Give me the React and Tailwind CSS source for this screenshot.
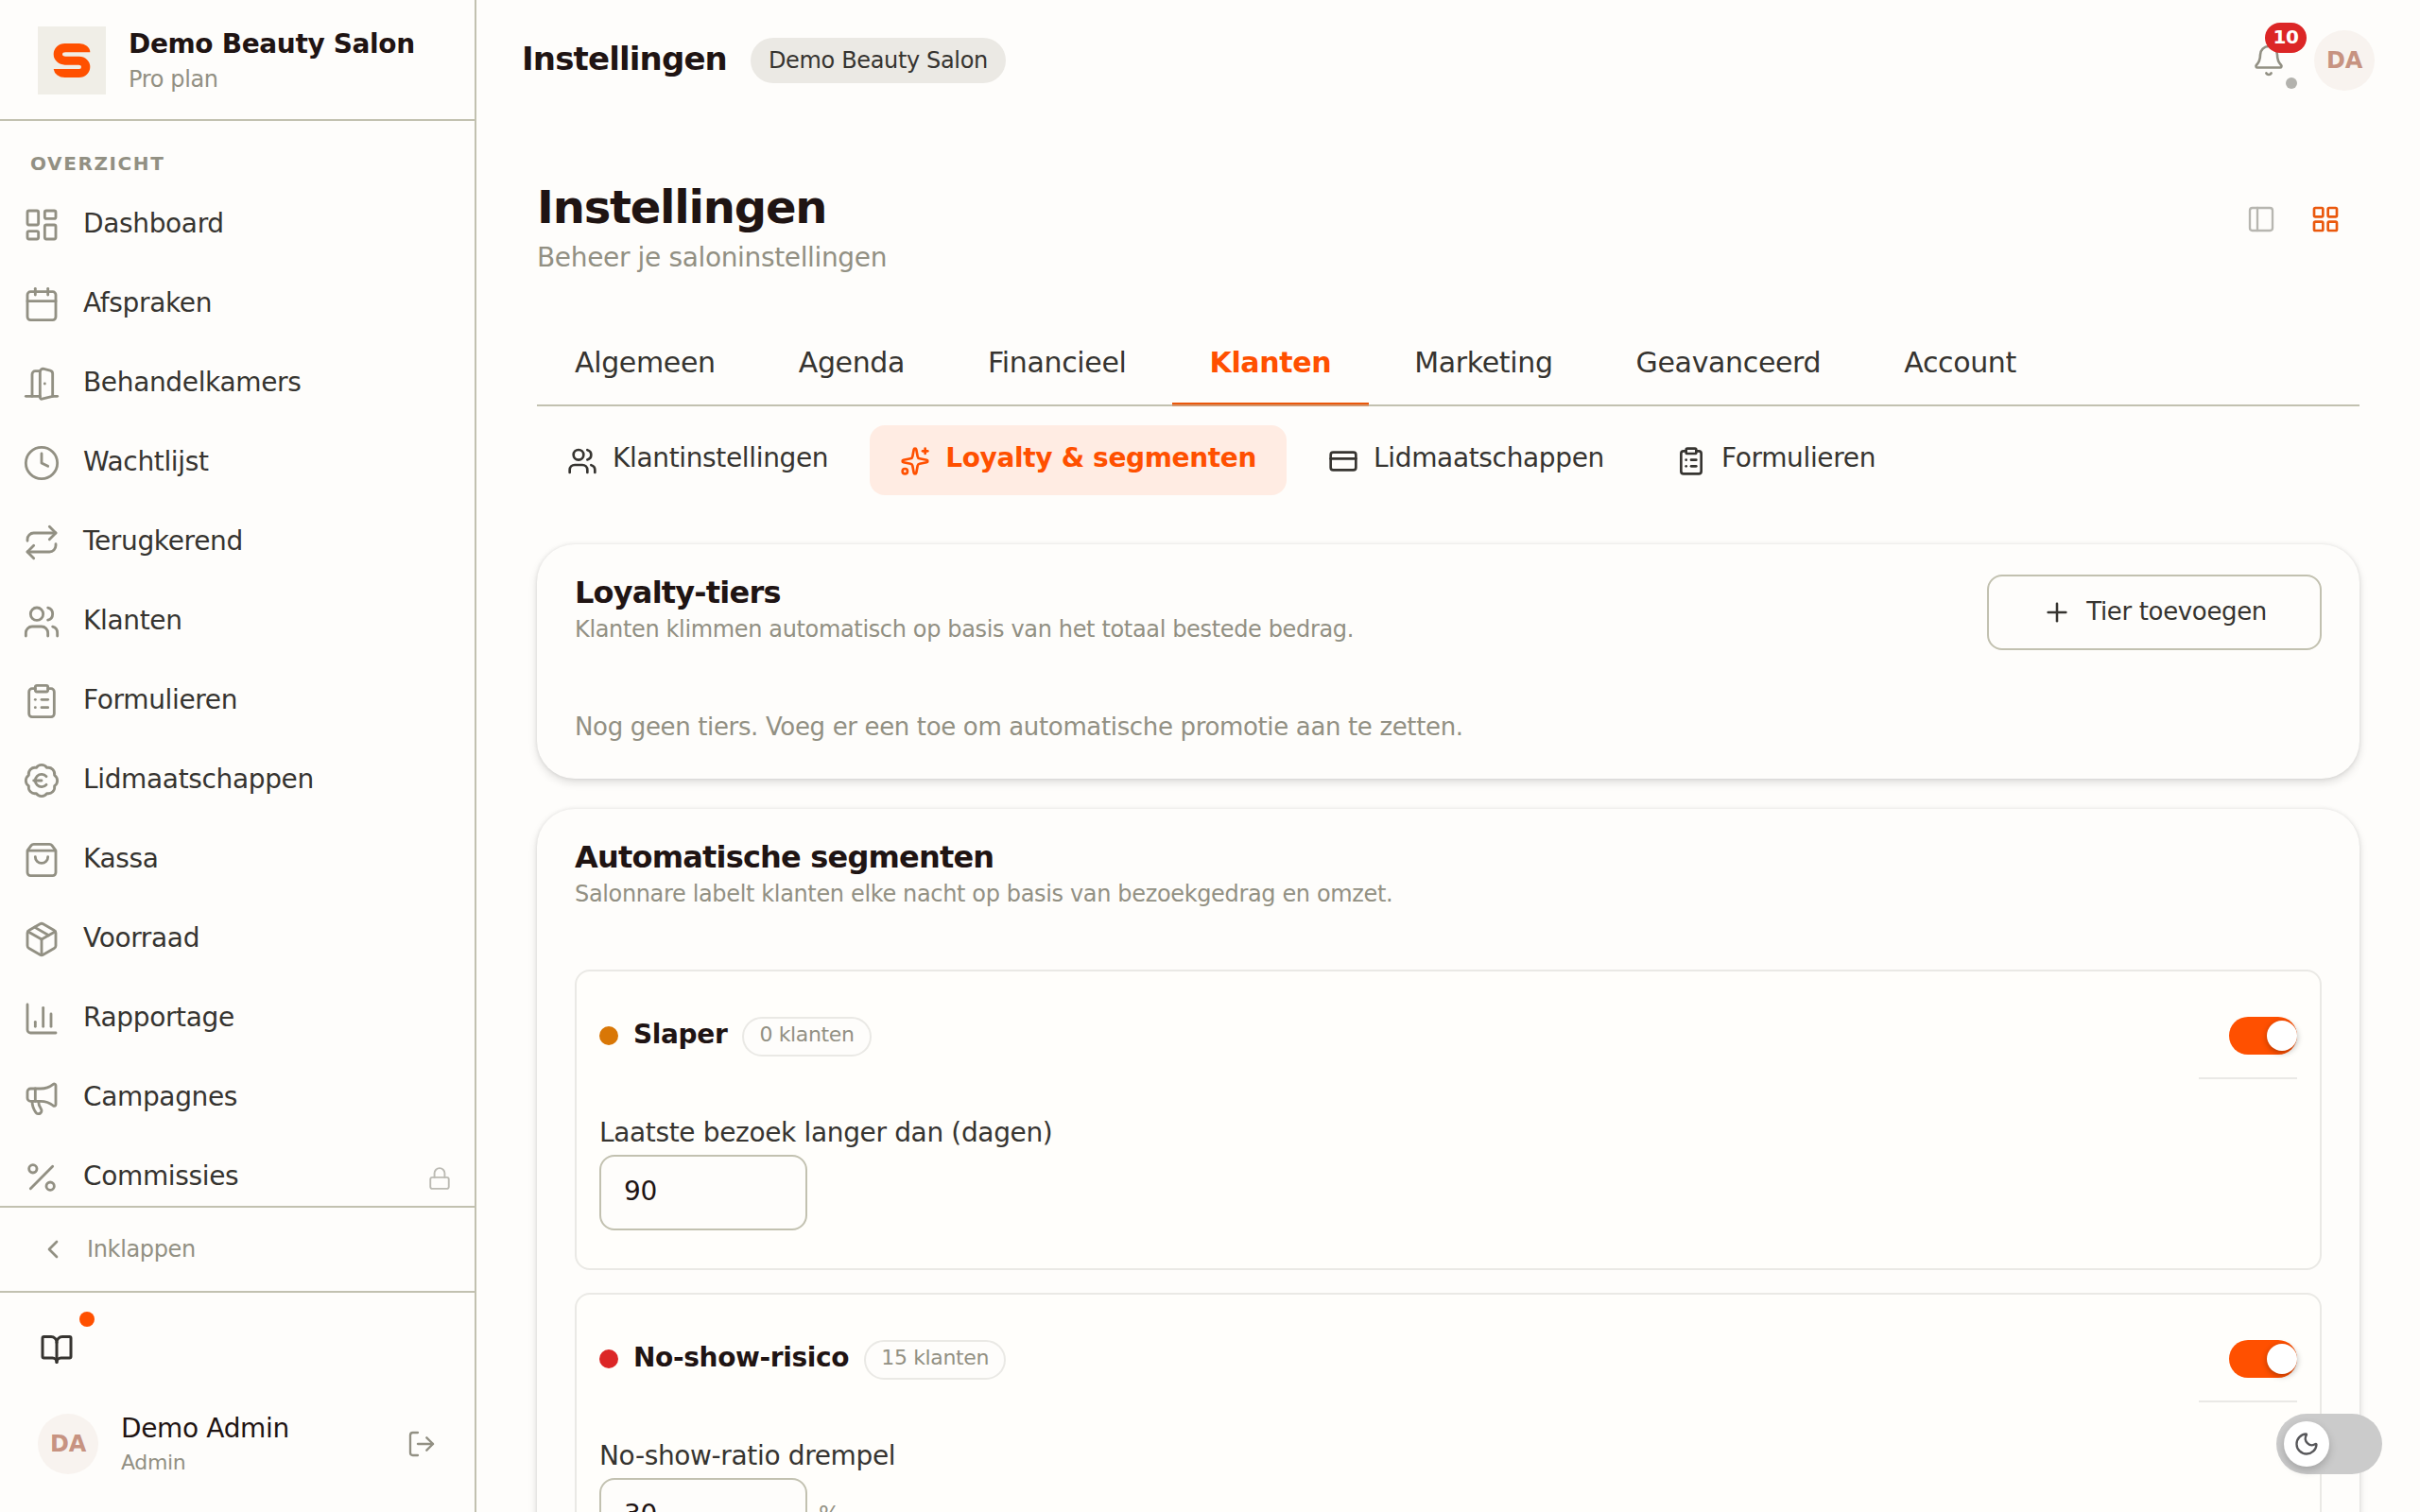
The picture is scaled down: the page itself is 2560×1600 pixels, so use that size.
import {
  BadgeEuro, Bell, BookOpen, Calendar, ChartColumn, ChevronLeft, ClipboardList, Clock, CreditCard, DoorOpen,
  LayoutDashboard, LayoutGrid, Lock, LogOut, Megaphone, Moon, Package, PanelLeft, Percent, Plus, Repeat,
  ShoppingBag, Sparkles, Users,
} from 'lucide-react'

const NAV = [
  { label: 'Dashboard', icon: LayoutDashboard },
  { label: 'Afspraken', icon: Calendar },
  { label: 'Behandelkamers', icon: DoorOpen },
  { label: 'Wachtlijst', icon: Clock },
  { label: 'Terugkerend', icon: Repeat },
  { label: 'Klanten', icon: Users },
  { label: 'Formulieren', icon: ClipboardList },
  { label: 'Lidmaatschappen', icon: BadgeEuro },
  { label: 'Kassa', icon: ShoppingBag },
  { label: 'Voorraad', icon: Package },
  { label: 'Rapportage', icon: ChartColumn },
  { label: 'Campagnes', icon: Megaphone },
  { label: 'Commissies', icon: Percent, locked: true },
]

const TABS = ['Algemeen', 'Agenda', 'Financieel', 'Klanten', 'Marketing', 'Geavanceerd', 'Account']

const SUBTABS = [
  { label: 'Klantinstellingen', icon: Users },
  { label: 'Loyalty & segmenten', icon: Sparkles },
  { label: 'Lidmaatschappen', icon: CreditCard },
  { label: 'Formulieren', icon: ClipboardList },
]

const SEGMENTS = [
  { name: 'Slaper', count: 0, dot: 'bg-[#d97706]', field: 'Laatste bezoek langer dan (dagen)', value: '90' },
  { name: 'No-show-risico', count: 15, dot: 'bg-[#dc2626]', field: 'No-show-ratio drempel', value: '30', unit: '%' },
]

function Logo() {
  return (
    <svg viewBox="0 0 216 216" className="size-[72px] shrink-0 bg-[#f0eee7]" aria-hidden="true">
      <path
        fill="#ff5000"
        d="M166 82H88Q78 82 78 88.500Q78 95 88 95H131A35 33.500 0 0 1 131 162H86A36 30 0 0 1 50 135H132Q138 135 138 128.500Q138 122 130 122H86A36 34 0 0 1 86 54H132A34 28 0 0 1 166 82Z"
      />
    </svg>
  )
}

function Avatar() {
  return (
    <div className="flex size-16 shrink-0 items-center justify-center rounded-full bg-[#f8f3ef] text-[24px] font-bold text-[#c79381]">
      DA
    </div>
  )
}

function Sidebar() {
  return (
    <aside className="flex h-full w-[504px] shrink-0 flex-col border-r-2 border-[#c2c1b0]">
      <div className="flex h-32 shrink-0 items-start gap-6 border-b-2 border-[#c2c1b0] px-10 pt-7">
        <Logo />
        <div>
          <div className="text-[28px] leading-[38px] font-bold text-[#1f1413]">Demo Beauty Salon</div>
          <div className="text-[24px] leading-9 text-[#929083]">Pro plan</div>
        </div>
      </div>

      <nav className="min-h-0 flex-1 overflow-hidden pt-7">
        <div className="mb-1.5 px-8 text-[20px] leading-[34px] font-bold tracking-[1.6px] text-[#929083] uppercase">
          Overzicht
        </div>
        {NAV.map(({ label, icon: Icon, locked }) => (
          <a key={label} className="flex h-[84px] items-center gap-6 px-6">
            <Icon size={40} strokeWidth={1.7} className="shrink-0 text-[#929083]" />
            <span className="flex-1 pb-[3px] text-[28px] text-[#363430]">{label}</span>
            {locked && <Lock size={26} strokeWidth={1.75} className="mt-0.5 text-[#bcbbb4]" />}
          </a>
        ))}
      </nav>

      <button className="flex h-[90px] shrink-0 items-center gap-5 border-t-2 border-[#c2c1b0] px-10 text-[24px] text-[#929083]">
        <ChevronLeft size={32} />
        Inklappen
      </button>

      <div className="h-[234px] shrink-0 border-t-2 border-[#c2c1b0] pt-6">
        <button className="relative ml-6 flex size-[72px] items-center justify-center text-[#363430]">
          <BookOpen size={36} />
          <span className="absolute -top-1 -right-1 size-4 rounded-full bg-[#ff5000]" />
        </button>
        <div className="mt-7 flex items-center gap-6 px-10">
          <Avatar />
          <div className="flex-1 pt-0.5 -mb-0.5">
            <div className="text-[28px] leading-9 text-[#1f1413]">Demo Admin</div>
            <div className="text-[22px] leading-9 text-[#929083]">Admin</div>
          </div>
          <LogOut size={32} strokeWidth={1.75} className="text-[#929083]" />
        </div>
      </div>
    </aside>
  )
}

function Topbar() {
  return (
    <header className="flex h-32 shrink-0 items-center justify-between px-12">
      <div className="flex items-center gap-[25px]">
        <span className="pb-[3px] text-[34px] font-bold tracking-tight text-[#1f1413]">Instellingen</span>
        <span className="flex h-12 items-center rounded-full bg-[#ebe9e4] px-[19px] text-[24px] text-[#363430]">
          Demo Beauty Salon
        </span>
      </div>
      <div className="flex items-center gap-[30px]">
        <div className="relative">
          <Bell size={36} strokeWidth={1.75} className="text-[#929083]" />
          <span className="absolute -top-[22px] left-[14px] flex h-8 w-11 items-center justify-center rounded-full bg-[#dc2626] pb-0.5 text-[20px] font-bold text-white">
            10
          </span>
          <span className="absolute top-9 left-9 size-3 rounded-full bg-[#b3b2ad]" />
        </div>
        <Avatar />
      </div>
    </header>
  )
}

function Switch() {
  return (
    <div className="ml-auto flex h-[90px] w-[104px] items-center justify-end border-b-2 border-[#eae9e6]">
      <button role="switch" aria-checked="true" className="flex h-10 w-[72px] items-center justify-end rounded-full bg-[#ff5000]">
        <span className="size-8 rounded-full bg-white shadow-[0_2px_6px_rgba(0,0,0,0.3)]" />
      </button>
    </div>
  )
}

function Segment({ name, count, dot, field, value, unit }) {
  return (
    <div className="h-[318px] rounded-2xl border-2 border-[#eae9e5] bg-[#fffefb] p-6">
      <div className="flex h-[90px] items-center gap-4">
        <span className={`mb-0.5 size-5 rounded-full ${dot}`} />
        <span className="pb-[5px] text-[28px] font-bold text-[#1f1413]">{name}</span>
        <span className="flex h-[42px] items-center rounded-full border-2 border-[#eae9e5] bg-[#fefdfb] px-4 pb-1.5 text-[22px] text-[#929083]">
          {count} klanten
        </span>
        <Switch />
      </div>
      <label className="mt-[35px] mb-px block text-[28px] leading-[44px] text-[#363430]">{field}</label>
      <div className="flex items-center gap-3">
        <input
          defaultValue={value}
          className="h-20 w-[220px] rounded-2xl border-2 border-[#c2c1b0] bg-[#fefdfb] px-6 pb-[3px] text-[28px] text-[#1f1413]"
        />
        {unit && <span className="pb-0.5 text-[24px] text-[#929083]">{unit}</span>}
      </div>
    </div>
  )
}

function Card({ title, subtitle, action, className = '', children }) {
  return (
    <section className={`rounded-[40px] bg-[#fefdfb] px-10 pt-8 shadow-[0_0_4px_rgba(0,0,0,0.09),0_4px_10px_rgba(0,0,0,0.13)] ${className}`}>
      <div className="flex items-start justify-between">
        <div>
          <h2 className="text-[32px] leading-[38px] font-bold tracking-tight text-[#1f1413]">{title}</h2>
          <p className="text-[24px] leading-10 text-[#929083]">{subtitle}</p>
        </div>
        {action}
      </div>
      {children}
    </section>
  )
}

export default function App() {
  return (
    <div className="flex h-[1600px] w-[2560px] overflow-hidden bg-[#fefdfb] font-['DejaVu_Sans',sans-serif] tracking-[-0.35px]">
      <Sidebar />

      <main className="flex min-w-0 flex-1 flex-col">
        <Topbar />
        <div className="px-16 pt-[62px]">
          <div className="flex h-[106px] items-start justify-between">
            <div>
              <h1 className="text-[48px] leading-[59px] font-bold tracking-tight text-[#1f1413]">Instellingen</h1>
              <p className="text-[28px] leading-[47px] text-[#929083]">Beheer je saloninstellingen</p>
            </div>
            <div className="mt-[26px] mr-5 flex gap-9">
              <PanelLeft size={32} strokeWidth={1.75} className="text-[#b7b6b0]" />
              <LayoutGrid size={32} className="text-[#ea580c]" />
            </div>
          </div>

          <div className="mt-11 flex gap-2 border-b-2 border-[#c2c1b0]">
            {TABS.map(t => (
              <button
                key={t}
                className={`h-[88px] border-b-2 px-10 text-[30px] ${
                  t === 'Klanten'
                    ? 'border-[#ea580c] font-bold text-[#ff5000] shadow-[0_2px_0_rgba(234,88,12,0.4)]'
                    : 'border-transparent text-[#363430]'
                }`}
              >
                {t}
              </button>
            ))}
          </div>

          <div className="mt-5 flex gap-3">
            {SUBTABS.map(({ label, icon: Icon }) => (
              <button
                key={label}
                className={`flex h-[74px] items-center gap-4 rounded-2xl px-8 text-[28px] ${
                  label.startsWith('Loyalty') ? 'bg-[#ffece3] font-bold text-[#ff5000]' : 'text-[#363430]'
                }`}
              >
                <Icon size={32} className="mt-0.5" />
                <span className="pb-[5px]">{label}</span>
              </button>
            ))}
          </div>

          <Card
            className="mt-[52px] h-[248px]"
            title="Loyalty-tiers"
            subtitle="Klanten klimmen automatisch op basis van het totaal bestede bedrag."
            action={
              <button className="flex h-20 items-center gap-[15px] rounded-2xl border-2 border-[#c2c1b0] px-14 text-[26px] text-[#363430]">
                <Plus size={32} strokeWidth={1.9} />
                <span className="pb-0.5">Tier toevoegen</span>
              </button>
            }
          >
            <p className="mt-[60px] text-[26px] leading-[42px] text-[#929083]">
              Nog geen tiers. Voeg er een toe om automatische promotie aan te zetten.
            </p>
          </Card>

          <Card
            className="mt-8 h-[900px]"
            title="Automatische segmenten"
            subtitle="Salonnare labelt klanten elke nacht op basis van bezoekgedrag en omzet."
          >
            <div className="mt-[60px] flex flex-col gap-6">
              {SEGMENTS.map(s => <Segment key={s.name} {...s} />)}
            </div>
          </Card>
        </div>
      </main>

      {/* Floating dark mode toggle */}
      <button className="fixed top-[1496px] left-[2408px] flex h-16 w-28 items-center rounded-full bg-[#cbcbcb] px-2">
        <span className="flex size-12 items-center justify-center rounded-full bg-white shadow-[0_4px_10px_rgba(0,0,0,0.2)]">
          <Moon size={28} className="text-[#57575a]" />
        </span>
      </button>
    </div>
  )
}
